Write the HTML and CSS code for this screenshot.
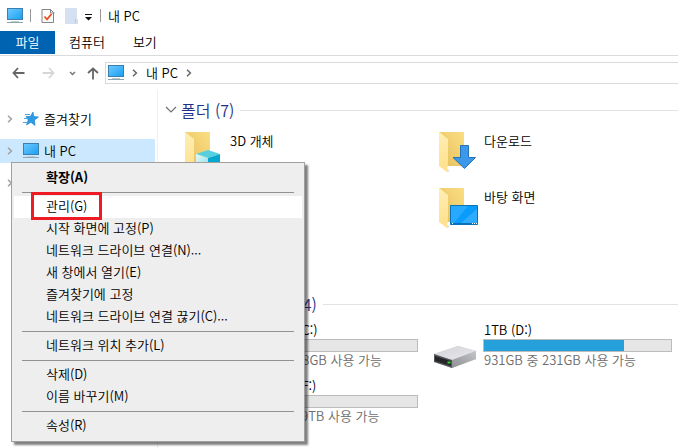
FILE: index.html
```
<!DOCTYPE html>
<html lang="ko">
<head>
    <meta charset="UTF-8">
    <meta name="viewport" content="width=device-width, initial-scale=1.0">
    <title>내 PC</title>
    <link rel="stylesheet" href="styles.css">
</head>
<body>
    <!-- Shared icons -->
    <svg class="sprite" width="0" height="0" aria-hidden="true">
        <defs>
            <linearGradient id="screen" x1="0" y1="0" x2="1" y2="1">
                <stop offset="0" stop-color="#6cc9ff"/>
                <stop offset="1" stop-color="#1ba0f2"/>
            </linearGradient>
            <linearGradient id="folder-back" x1="0" y1="1" x2="1" y2="0">
                <stop offset="0" stop-color="#e5bd5c"/>
                <stop offset="1" stop-color="#fbdf83"/>
            </linearGradient>
            <linearGradient id="folder-front" x1="0" y1="0" x2="0" y2="1">
                <stop offset="0" stop-color="#ffeeb5"/>
                <stop offset="1" stop-color="#ffe08a"/>
            </linearGradient>
            <linearGradient id="drive-top" x1="0" y1="0" x2="1" y2="1">
                <stop offset="0" stop-color="#d3d3d7"/>
                <stop offset="1" stop-color="#e9e9ed"/>
            </linearGradient>
            <linearGradient id="drive-side" x1="0" y1="1" x2="1" y2="0">
                <stop offset="0" stop-color="#8f9093"/>
                <stop offset="1" stop-color="#c4c5c8"/>
            </linearGradient>
            <linearGradient id="cube-left" x1="0" y1="0" x2="1" y2="1">
                <stop offset="0" stop-color="#e2f7f8"/>
                <stop offset="1" stop-color="#8fdfe8"/>
            </linearGradient>
        </defs>
        <symbol id="pc" viewBox="0 0 16 16">
            <path d="M0 0h16v12H0z" fill="#3a7fb0"/>
            <path d="M1 1h14v10H1z" fill="url(#screen)"/>
            <path d="M4 13h8v1H4z" fill="#b9cbd6"/>
            <path d="M0 14h16v1H0z" fill="#8fa5b3"/>
        </symbol>
        <symbol id="chevron" viewBox="0 0 6 8">
            <path d="M1 .8 4.400 4 1 7.200" fill="none" stroke="currentColor" stroke-width="1.500"/>
        </symbol>
        <symbol id="folder" viewBox="0 0 50 48">
            <path d="M7 4h25v34H15z" fill="url(#folder-back)"/>
            <path d="M15 41l3 2-3 1z" fill="#ddd"/>
            <path d="M7 4l9 7v23l-1 10-8-6z" fill="url(#folder-front)"/>
        </symbol>
        <symbol id="drive" viewBox="0 0 50 48">
            <path d="M2 32 26 24l18 5v8L20 46 2 40z" fill="#c9c9cc"/>
            <path d="M2 32 26 24l18 5-24 9z" fill="url(#drive-top)"/>
            <path d="M20 38l24-9v8l-24 9z" fill="url(#drive-side)"/>
            <path d="M2 32l18 6v8L2 40z" fill="#55575a"/>
            <path d="M3 34l16 5v5L3 39z" fill="#242527"/>
            <path d="M15.500 39.500h3v2h-3z" fill="#2fd62f"/>
        </symbol>
    </svg>

    <div class="explorer">
        <header class="titlebar">
            <svg class="icon16"><use href="#pc"/></svg>
            <span class="bar"></span>
            <button class="quick" aria-label="속성">
                <svg width="14" height="16" viewBox="0 0 14 16">
                    <path d="M1 1.500h8.500L12.500 4.500v10H1z" fill="#fbfbfb" stroke="#858585"/>
                    <path d="M9.500 1v4h4" fill="none" stroke="#858585"/>
                    <path d="M3.500 8.500l2.500 2.800L10.500 6" fill="none" stroke="#e8501c" stroke-width="1.800"/>
                </svg>
            </button>
            <button class="quick" aria-label="새 폴더">
                <svg width="13" height="16" viewBox="0 0 13 16">
                    <path d="M0 0h12v11h1v5H0z" fill="#d5e0f1"/>
                    <path d="M10.500 11v4.500" stroke="#bccbe2"/>
                </svg>
            </button>
            <button class="quick more" aria-label="빠른 실행 도구 모음 사용자 지정">
                <svg width="7" height="7" viewBox="0 0 7 7">
                    <path d="M0 0h7v1H0zM0 3h7L3.500 6.500z" fill="#111"/>
                </svg>
            </button>
            <span class="bar"></span>
            <span class="title">내 PC</span>
        </header>

        <nav class="tabs">
            <button class="tab tab-file">파일</button>
            <button class="tab">컴퓨터</button>
            <button class="tab">보기</button>
        </nav>

        <div class="toolbar">
            <div class="history">
                <button aria-label="뒤로">
                    <svg width="13" height="12" viewBox="0 0 13 12"><path d="M6 1 1.500 6 6 11M1.500 6H12.500" fill="none" stroke="#666" stroke-width="1.800"/></svg>
                </button>
                <button aria-label="앞으로">
                    <svg width="13" height="12" viewBox="0 0 13 12"><path d="M7 1l4.500 5L7 11M11.500 6H.5" fill="none" stroke="#d6d6d6" stroke-width="1.800"/></svg>
                </button>
                <button class="recent" aria-label="최근 위치">
                    <svg width="7" height="5" viewBox="0 0 7 5"><path d="M1 1l2.500 2.500L6 1" fill="none" stroke="#777" stroke-width="1.500"/></svg>
                </button>
                <button aria-label="위로">
                    <svg width="12" height="13" viewBox="0 0 12 13"><path d="M1 6l5-4.500L11 6M6 1.500v11" fill="none" stroke="#666" stroke-width="1.800"/></svg>
                </button>
            </div>
            <div class="address">
                <svg class="icon16"><use href="#pc"/></svg>
                <svg class="chevron"><use href="#chevron"/></svg>
                <a href="#">내 PC</a>
                <svg class="chevron"><use href="#chevron"/></svg>
            </div>
        </div>

        <div class="panes">
            <aside class="tree">
                <a class="tree-item" href="#">
                    <svg class="chevron"><use href="#chevron"/></svg>
                    <svg class="icon16" viewBox="0 0 16 16">
                        <path d="M10 1l.8 4.400 4.700.6-4 3 .5 5.500-4-3.200L3.500 14l1.700-5L3 5.500l4.500-.2z" fill="#2b9be6" stroke="#1b7fc4" stroke-width=".6"/>
                        <path d="M2 3.500h5M1 7.500h4M0 11.500h4" stroke="#4aa6e2"/>
                    </svg>
                    즐겨찾기
                </a>
                <a class="tree-item selected" href="#">
                    <svg class="chevron"><use href="#chevron"/></svg>
                    <svg class="icon16"><use href="#pc"/></svg>
                    내 PC
                </a>
                <a class="tree-item" href="#" aria-label="네트워크">
                    <svg class="chevron"><use href="#chevron"/></svg>
                    <svg class="icon16"><use href="#pc"/></svg>
                </a>
            </aside>

            <main class="content">
                <section>
                    <h2 class="group">
                        <svg width="12" height="8" viewBox="0 0 12 8"><path d="M1 1l5 5 5-5" fill="none" stroke="#707070" stroke-width="1.200"/></svg>
                        폴더 (7)
                    </h2>
                    <div class="tiles">
                        <div class="tile">
                            <svg class="tile-icon" viewBox="0 0 50 48">
                                <use href="#folder"/>
                                <path d="M18 26l12-4 12 4-12 4z" fill="#56cfe1"/>
                                <path d="M18 26l12 4v13l-12-5z" fill="url(#cube-left)"/>
                                <path d="M42 26l-12 4v13l12-5z" fill="#08a7cf"/>
                            </svg>
                            <div class="folder-name">3D 개체</div>
                        </div>
                        <div class="tile">
                            <svg class="tile-icon" viewBox="0 0 50 48">
                                <use href="#folder"/>
                                <path d="M28.500 17.500h8v12h7L32.500 40.500l-11.500-11h7.500z" fill="#3c98e8" stroke="#2672b8"/>
                            </svg>
                            <div class="folder-name">다운로드</div>
                        </div>
                        <div class="tile">
                            <svg class="tile-icon"><use href="#folder"/></svg>
                        </div>
                        <div class="tile">
                            <svg class="tile-icon" viewBox="0 0 50 48">
                                <use href="#folder"/>
                                <path d="M18.500 21.500h27v19h-27z" fill="#0a9cfb" stroke="#0b72b5"/>
                                <path d="M19 22h17L22 39h-3z" fill="#26a9ff"/>
                                <path d="M45 25v14H29z" fill="#2fabff"/>
                                <path d="M19 39.500h26" stroke="#0873b8"/>
                                <path d="M20 39.500h1M40 39.500h1M42 39.500h1M44 39.500h1" stroke="#fff"/>
                            </svg>
                            <div class="folder-name">바탕 화면</div>
                        </div>
                        <div class="tile">
                            <svg class="tile-icon"><use href="#folder"/></svg>
                        </div>
                    </div>
                </section>

                <section>
                    <h2 class="group">
                        <svg width="12" height="8" viewBox="0 0 12 8"><path d="M1 1l5 5 5-5" fill="none" stroke="#707070" stroke-width="1.200"/></svg>
                        장치 및 드라이브 (4)
                    </h2>
                    <div class="tiles">
                        <div class="tile">
                            <svg class="tile-icon"><use href="#drive"/></svg>
                            <div class="drive">
                                <div>로컬 디스크 (C:)</div>
                                <div class="usage"><div class="used" style="width: 38%"></div></div>
                                <div class="free">237GB 중 138GB 사용 가능</div>
                            </div>
                        </div>
                        <div class="tile">
                            <svg class="tile-icon"><use href="#drive"/></svg>
                            <div class="drive">
                                <div>1TB (D:)</div>
                                <div class="usage"><div class="used" style="width: 75%"></div></div>
                                <div class="free">931GB 중 231GB 사용 가능</div>
                            </div>
                        </div>
                        <div class="tile">
                            <svg class="tile-icon"><use href="#drive"/></svg>
                            <div class="drive">
                                <div>로컬 디스크 (F:)</div>
                                <div class="usage"><div class="used" style="width: 38%"></div></div>
                                <div class="free">3.6TB 중 1.89TB 사용 가능</div>
                            </div>
                        </div>
                    </div>
                </section>
            </main>
        </div>

        <div class="context-menu" role="menu">
            <button class="default" role="menuitem">확장(A)</button>
            <hr>
            <button class="active" role="menuitem">관리(G)</button>
            <button role="menuitem">시작 화면에 고정(P)</button>
            <button role="menuitem">네트워크 드라이브 연결(N)...</button>
            <button role="menuitem">새 창에서 열기(E)</button>
            <button role="menuitem">즐겨찾기에 고정</button>
            <button role="menuitem">네트워크 드라이브 연결 끊기(C)...</button>
            <hr>
            <button role="menuitem">네트워크 위치 추가(L)</button>
            <hr>
            <button role="menuitem">삭제(D)</button>
            <button role="menuitem">이름 바꾸기(M)</button>
            <hr>
            <button role="menuitem">속성(R)</button>
            <span class="marker"></span>
        </div>
    </div>
</body>
</html>
```
FILE: styles.css
```
* {
    box-sizing: border-box;
}

body {
    margin: 0;
    background-color: #fff;
    color: #000;
    font-family: "Noto Sans CJK KR", sans-serif;
    font-size: 13px;
    font-weight: 350;
    line-height: 18px;
}

button {
    padding: 0;
    border: none;
    background: none;
    color: inherit;
    font: inherit;
}

a {
    color: inherit;
    text-decoration: none;
}

svg {
    display: block;
    flex-shrink: 0;
}

.sprite {
    position: absolute;
}

.icon16 {
    width: 16px;
    height: 16px;
}

.chevron {
    width: 6px;
    height: 8px;
    color: #666;
}

.explorer {
    position: relative;
    display: flex;
    flex-direction: column;
    height: 100vh;
    overflow: hidden;
}

/* Title bar */
.titlebar {
    display: flex;
    align-items: center;
    height: 31px;
    padding-left: 7px;
    gap: 7px;
}

.titlebar .bar {
    width: 1px;
    height: 13px;
    background-color: #999;
}

.titlebar .quick {
    margin-left: 3px;
}

.titlebar .quick.more {
    margin: 3px 1px 0 0;
}

/* Ribbon tabs */
.tabs {
    display: flex;
    height: 25px;
    border-bottom: 1px solid #dadbdc;
}

.tab {
    height: 23px;
    padding: 0 14px 2px;
}

.tab-file {
    width: 55px;
    background-color: #0063b1;
    color: #fff;
}

/* Address row */
.toolbar {
    display: flex;
    align-items: center;
    padding: 6px 0;
}

.history {
    display: flex;
    align-items: center;
    width: 105px;
    padding-left: 12px;
    gap: 17px;
}

.history .recent {
    margin: 0 -6px 0 -3px;
}

.address {
    display: flex;
    align-items: center;
    flex: 1;
    height: 22px;
    padding-left: 2px;
    gap: 8px;
    border: 1px solid #d9d9d9;
    border-right: none;
}

/* Panes */
.panes {
    display: flex;
    flex: 1;
    min-height: 0;
}

.tree {
    display: flex;
    flex-direction: column;
    width: 158px;
    flex-shrink: 0;
    padding: 17px 2px 0 0;
    gap: 8px;
    border-right: 1px solid #f0f0f0;
}

.tree-item {
    display: flex;
    align-items: center;
    height: 24px;
    padding-left: 7px;
    gap: 5px;
}

.tree-item .chevron {
    margin-right: 5px;
    color: #a0a0a0;
}

.tree-item.selected {
    background-color: #cce8ff;
}

.content {
    flex: 1;
    min-width: 0;
    padding: 8px 0 0 7px;
}

.group {
    display: flex;
    align-items: center;
    height: 24px;
    margin: 0;
    gap: 4px;
    color: #1e3287;
    font-size: 16px;
    font-weight: 350;
    white-space: nowrap;
}

.group::after {
    content: "";
    flex: 1;
    height: 1px;
    margin-left: 2px;
    background-color: #e2e2e2;
}

.tiles {
    display: grid;
    grid-template-columns: repeat(auto-fill, 240px);
    gap: 8px 14px;
    padding: 6px 0 4px 13px;
}

.tile {
    display: flex;
    gap: 1px;
    height: 48px;
}

.tile-icon {
    width: 50px;
    height: 48px;
}

.folder-name {
    padding: 4px 0 0 1px;
}

.drive {
    width: 189px;
    flex-shrink: 0;
    line-height: 16px;
}

.drive > div {
    padding-left: 1px;
}

.drive .usage {
    height: 13px;
    margin-top: 1px;
    padding: 0;
    border: 1px solid #bcbcbc;
    background-color: #e6e6e6;
}

.used {
    height: 100%;
    background-color: #26a0da;
}

.free {
    color: #6d6d6d;
}

/* Context menu */
.context-menu {
    position: absolute;
    top: 162px;
    left: 11px;
    display: flex;
    flex-direction: column;
    width: 294px;
    padding: 4px 2px;
    border: 1px solid #a0a0a0;
    background-color: #eee;
    box-shadow: 3px 3px 2px rgba(0, 0, 0, 0.5);
}

.context-menu button {
    height: 22px;
    padding: 0 0 2px 32px;
    text-align: left;
}

.context-menu .default {
    font-weight: 700;
}

.context-menu .active {
    background-color: #fff;
}

.context-menu hr {
    width: 272px;
    height: 1px;
    margin: 3px 8px;
    border: none;
    background-color: #919191;
}

.marker {
    position: absolute;
    top: 29px;
    left: 19px;
    width: 71px;
    height: 28px;
    border: 3px solid #ed1c24;
}
```
